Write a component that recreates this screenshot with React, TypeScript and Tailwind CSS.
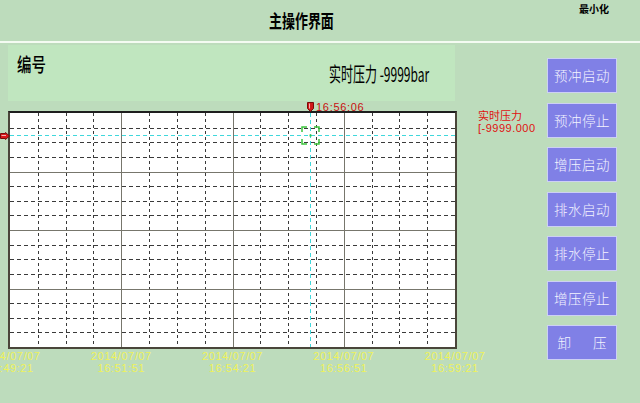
const cjk = "font-['Noto_Sans_CJK_SC',sans-serif]";

const buttons = ["预冲启动", "预冲停止", "增压启动", "排水启动", "排水停止", "增压停止"];

const ticks = [
  { date: "2014/07/07", time: "16:49:21" },
  { date: "2014/07/07", time: "16:51:51" },
  { date: "2014/07/07", time: "16:54:21" },
  { date: "2014/07/07", time: "16:56:51" },
  { date: "2014/07/07", time: "16:59:21" },
];

function Grid() {
  const w = 445;
  const h = 234;
  const cols = Array.from({ length: 15 }, (_, i) => i + 1);
  const rows = Array.from({ length: 15 }, (_, i) => i + 1);
  return (
    <svg width={w} height={h} className="block" aria-hidden="true">
      {cols.map((k) => {
        const x = Math.round((k * w) / 16) + 0.5;
        const solid = k % 4 === 0;
        return (
          <line
            key={"c" + k}
            x1={x}
            x2={x}
            y1={0}
            y2={h}
            stroke={solid ? "#77766c" : "#3a3a3a"}
            strokeWidth={1}
            strokeDasharray={solid ? undefined : "3 3"}
          />
        );
      })}
      {rows.map((k) => {
        const y = Math.round((k * h) / 16) + 0.5;
        const solid = k % 4 === 0;
        return (
          <line
            key={"r" + k}
            x1={0}
            x2={w}
            y1={y}
            y2={y}
            stroke={solid ? "#77766c" : "#3a3a3a"}
            strokeWidth={1}
            strokeDasharray={solid ? undefined : "4 3"}
          />
        );
      })}
      {/* cursor */}
      <line x1={0} x2={w} y1={22.5} y2={22.5} stroke="#3fd8dc" strokeDasharray="4 3" />
      <line x1={300.5} x2={300.5} y1={0} y2={h} stroke="#3fd8dc" strokeDasharray="4 3" />
      <g stroke="#3cc43c" strokeWidth={1.5} fill="none">
        <path d="M292 19 V14 H297" />
        <path d="M304 14 H309 V19" />
        <path d="M309 26 V31 H304" />
        <path d="M297 31 H292 V26" />
      </g>
      <rect x={299.5} y={21.5} width={2} height={2} fill="#3cc43c" />
    </svg>
  );
}

export default function App() {
  return (
    <div className="w-[640px] h-[403px] overflow-hidden bg-[#bddcbc] font-['Liberation_Sans',sans-serif]">
      <div className="flex h-[41px] items-start">
        <span
          className={`${cjk} ml-[269px] mt-[10px] inline-block origin-left scale-x-[0.72] text-[18px] font-bold leading-[20px] text-black`}
        >
          主操作界面
        </span>
        <span className={`${cjk} ml-auto mr-[31px] mt-[3px] text-[10px] font-bold leading-[12px] text-black`}>
          最小化
        </span>
      </div>
      <div className="h-[2px] bg-[#f4fbf2]" />

      <div className="flex items-start">
        <div className="ml-[8px] flex w-[449px] shrink-0 flex-col">
          <div className="mt-[2px] flex h-[56px] w-[447px] items-start overflow-hidden bg-[#c0e6bf] pl-[9px] pt-[8px]">
            <div className="w-[312px] shrink-0">
              <span className={`${cjk} inline-block origin-left scale-x-[0.76] text-[19px] font-medium leading-[22px] text-black`}>
                编号
              </span>
            </div>
            <span
              className={`${cjk} mt-[10px] inline-block shrink-0 origin-left scale-x-[0.6] whitespace-nowrap text-[20px] leading-[22px] text-black`}
            >
              实时压力 -9999bar
            </span>
          </div>

          <div className="relative mt-[10px] h-[238px] w-[449px] border-2 border-[#4a463a] border-t-[#1e1e1e] bg-white">
            <Grid />
            <svg width="7" height="10" viewBox="0 0 7 10" className="absolute left-[297px] top-[-11px]" aria-hidden="true">
              <path d="M0.5 0.5 H6.5 V6.5 L3.5 9.5 L0.5 6.5 Z" fill="#d01818" stroke="#7a0a0a" />
              <path d="M2.5 1.5 V6.5" stroke="#f4b0b0" />
            </svg>
            <span className="absolute left-[306px] top-[-11px] text-[11px] leading-[11px] tracking-[0.7px] text-[#c81010]">
              16:56:06
            </span>
            <svg width="10" height="8" viewBox="0 0 10 8" className="absolute left-[-10px] top-[19px]" aria-hidden="true">
              <path d="M0.5 1.5 H5.5 V0.5 L9.5 4 L5.5 7.5 V6.5 H0.5 Z" fill="#d81818" stroke="#7a0a0a" />
              <path d="M1.5 3.5 H6" stroke="#f4b0b0" />
            </svg>
          </div>

          <div className="mt-[1px] ml-[2px] flex w-[445px] justify-between">
            {ticks.map((t) => (
              <div key={t.time} className="flex w-0 justify-center">
                <div className="flex flex-col items-center whitespace-nowrap text-[11px] leading-[12px] tracking-[0.6px] text-[#eef25a]">
                  <span>{t.date}</span>
                  <span>{t.time}</span>
                </div>
              </div>
            ))}
          </div>
        </div>

        <div className="ml-[21px] mt-[66px] flex w-[69px] shrink-0 flex-col gap-[1px] text-[#e01010]">
          <span className={`${cjk} h-[12px] text-[11px] leading-[12px]`}>实时压力</span>
          <span className="text-[11px] leading-[12px] tracking-[0.5px]">[-9999.000</span>
        </div>

        <div className="mt-[15px] flex w-[70px] shrink-0 flex-col gap-[9.5px]">
          {buttons.map((b) => (
            <div
              key={b}
              className={`${cjk} flex h-[35px] items-center justify-center border border-[#cdd0f4] bg-[#8080e6] text-[13.5px] font-light tracking-[0.5px] text-[#f4f4ff]`}
            >
              {b}
            </div>
          ))}
          <div
            className={`${cjk} flex h-[35px] items-center justify-center gap-[22px] border border-[#cdd0f4] bg-[#8080e6] text-[13.5px] font-light text-[#f4f4ff]`}
          >
            <span>卸</span>
            <span>压</span>
          </div>
        </div>
      </div>
    </div>
  );
}
